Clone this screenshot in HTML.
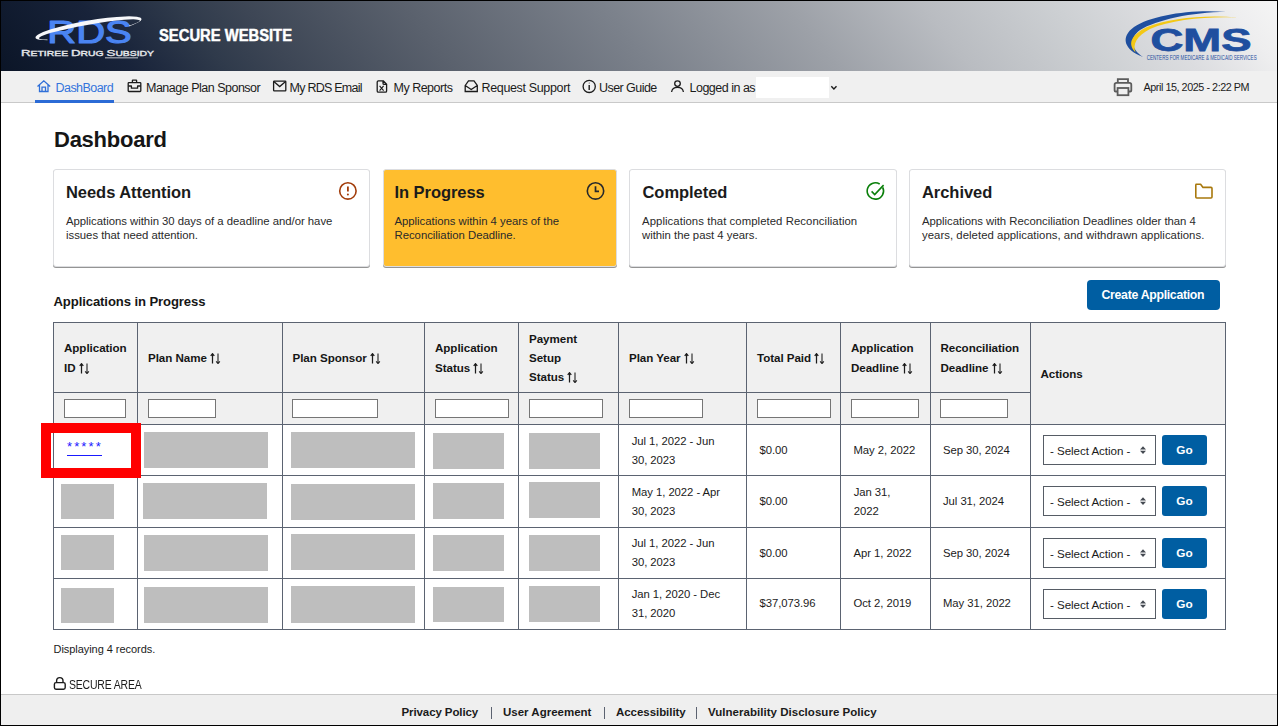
<!DOCTYPE html>
<html><head><meta charset="utf-8">
<style>
*{box-sizing:border-box;margin:0;padding:0}
html,body{width:1278px;height:726px;overflow:hidden;background:#fff}
body{position:relative;font-family:"Liberation Sans",sans-serif;color:#1b1b1b}
.t{position:absolute;white-space:nowrap;line-height:1}
.frame{position:absolute;left:0;top:0;width:1278px;height:726px;border:1px solid #000;pointer-events:none;z-index:50}
#hdr{position:absolute;left:0;top:0;width:1278px;height:71px;
 background:linear-gradient(52deg,#0b1527 0%,#18233a 10%,#2f3a4b 17%,#3d4655 22%,#5a616d 34%,#7b818b 49%,#9da1a8 63%,#b9bcc1 73%,#cdd0d3 83%,#dcdde0 90%,#eeeeef 96%,#f5f5f5 100%)}
#nav{position:absolute;left:0;top:71px;width:1278px;height:32px;background:#f0f0f0;border-bottom:1px solid #c9c9c9}
.nv{font-size:12.5px;color:#1b1b1b;top:81.5px}
.card{position:absolute;top:169px;height:98px;border:1px solid #dcdde0;border-radius:3px;background:#fff;box-shadow:0 1px 0.5px rgba(0,0,0,.42)}
.ct{font-size:16.5px;font-weight:bold;color:#1b1b1b}
.cd{font-size:11.5px;color:#2b2b2b;line-height:14px;white-space:normal}
#tbl{position:absolute;left:53px;top:322px}
.ln{position:absolute;background:#5b6371}
.ph{position:absolute;background:#bebebe}
.th{font-size:11.8px;font-weight:bold;color:#1b1b1b;line-height:19px;white-space:normal}
.td{font-size:11.5px;color:#1b1b1b;line-height:19px}
.inp{position:absolute;top:399px;height:19px;background:#fff;border:1px solid #757575}
.sel{position:absolute;left:1043px;width:113px;height:30px;border:1px solid #565c65;background:#fff}
.go{position:absolute;left:1162px;width:45px;height:30px;background:#005ea2;border-radius:3px}
.ft{font-size:11.5px;font-weight:bold;color:#1b1b1b;top:706px}
</style></head><body>
<div id="hdr"></div>
<div id="nav"></div>
<svg style="position:absolute;left:0;top:0" width="320" height="70" viewBox="0 0 320 70">
 <defs>
  <mask id="swm" maskUnits="userSpaceOnUse" x="0" y="0" width="320" height="70">
   <ellipse cx="88.5" cy="28.3" rx="53.8" ry="7.6" fill="#fff" transform="rotate(-10 88.5 28.3)"/>
   <ellipse cx="89.2" cy="29.6" rx="51.2" ry="4.9" fill="#000" transform="rotate(-10 88.5 28.3)"/>
   <polygon points="47.5,36.5 47.5,60 129,60 129,23" fill="#000"/>
  </mask>
  <linearGradient id="silv" x1="0" y1="0" x2="0" y2="1"><stop offset="0" stop-color="#ffffff"/><stop offset="1" stop-color="#c4c8ce"/></linearGradient>
 </defs>
 <text x="47.3" y="42.6" font-family="Liberation Sans" font-size="32" fill="#4a84f2" stroke="#4a84f2" stroke-width="1.15" stroke-linejoin="round" textLength="84.5" lengthAdjust="spacingAndGlyphs">RDS</text>
 <rect x="0" y="0" width="320" height="70" fill="#f6f7fa" mask="url(#swm)"/>
 <text x="21" y="56.2" font-family="Liberation Sans" font-weight="normal" fill="url(#silv)" stroke="#e6e8ec" stroke-width="0.35" textLength="133" lengthAdjust="spacingAndGlyphs"><tspan font-size="9">R</tspan><tspan font-size="7">ETIREE </tspan><tspan font-size="9">D</tspan><tspan font-size="7">RUG </tspan><tspan font-size="9">S</tspan><tspan font-size="7">UBSIDY</tspan></text>
 <rect x="105" y="57.4" width="33" height="0.9" fill="#d8dbe0"/>
 <text x="159" y="41" font-family="Liberation Sans" font-weight="bold" font-size="15.6" fill="#fff" stroke="#fff" stroke-width="0.45" textLength="133" lengthAdjust="spacingAndGlyphs">SECURE WEBSITE</text>
</svg>
<svg style="position:absolute;left:1100px;top:0" width="177" height="70" viewBox="1100 0 177 70">
 <path d="M1143,57 C1124,50 1120,37 1134,27 C1152,15 1192,9 1226,12 C1192,12 1156,20 1140,30 C1129,38 1131,49 1143,57 Z" fill="#1f4f9f"/>
 <path d="M1135.5,52.5 C1127.5,44 1130.5,35.5 1146.5,27.3 C1170,17.8 1206,14.6 1238,17.6 C1206,16.3 1172,19.8 1150,29 C1136.5,36 1132.5,44 1135.5,52.5 Z" fill="#f3c816"/>
 <text x="1150.5" y="51.4" font-family="Liberation Sans" font-weight="bold" font-size="31" fill="#1f4f9f" stroke="#1f4f9f" stroke-width="0.8" textLength="101" lengthAdjust="spacingAndGlyphs">CMS</text>
 <text x="1146.7" y="59.6" font-family="Liberation Sans" font-size="6.4" fill="#1f4f9f" textLength="110" lengthAdjust="spacingAndGlyphs">CENTERS FOR MEDICARE &amp; MEDICAID SERVICES</text>
</svg>

<div style="position:absolute;left:35px;top:100px;width:79px;height:3px;background:#2b6bd6"></div>
<svg style="position:absolute;left:0;top:70px" width="1278" height="32" viewBox="0 70 1278 32" fill="none" stroke="#1b1b1b" stroke-width="1.3">
 <g stroke="#2f6fd8"><path d="M37.5,86.5 L43.8,80.8 L50.2,86.5 M39.5,85 V91.5 H48 V85 M42,91.5 V87.2 H45.5 V91.5"/></g>
 <g stroke-linejoin="round"><rect x="128.2" y="82.6" width="12.6" height="8.9" rx="0.7"/><path d="M132.4,82.6 V80.6 Q132.4,80.2 132.8,80.2 H136.2 Q136.6,80.2 136.6,80.6 V82.6 M128.2,86 H131.4 V88.2 H137.6 V86 H140.8"/></g>
 <g><rect x="273.6" y="81.2" width="12.2" height="9.6" rx="0.6"/><path d="M273.8,81.6 L279.7,86.6 L285.6,81.6"/></g>
 <g stroke-linejoin="round"><path d="M378.4,80.8 H383.2 L386.6,84.2 V91 Q386.6,92.2 385.4,92.2 H378.4 Q377.2,92.2 377.2,91 V82 Q377.2,80.8 378.4,80.8 Z M383,81 V83.2 Q383,84.4 384.2,84.4 H386.4"/><path d="M379.6,85.8 L383.6,90.6 M383.6,85.8 L379.6,90.6" stroke-width="1.1"/></g>
 <g><path d="M465.2,85.5 L468.5,80.8 H474 L477.3,85.5 V91.5 H465.2 Z M465.2,85.5 L471.2,89.5 L477.3,85.5"/></g>
 <g><circle cx="589.2" cy="86.4" r="6.1"/><path d="M589.2,85 V90" stroke-width="1.4"/><circle cx="589.2" cy="82.9" r="0.5" fill="#1b1b1b" stroke="none"/></g>
 <g><circle cx="677.5" cy="83.6" r="2.8"/><path d="M671.6,92 C672,88.6 674.5,87.4 677.5,87.4 C680.5,87.4 683,88.6 683.4,92"/></g>
 <path d="M831.3,86.3 L833.9,89 L836.5,86.3" stroke-width="1.4"/>
 <g stroke="#5c5c5c" stroke-width="1.8"><path d="M1117.8,82.8 V79.2 H1128 V82.8"/><path d="M1117.3,91.5 H1115.6 Q1114.6,91.5 1114.6,90.5 V84.8 Q1114.6,82.9 1116.5,82.9 H1129.4 Q1131.3,82.9 1131.3,84.8 V90.5 Q1131.3,91.5 1130.3,91.5 H1128.6"/><rect x="1117.6" y="88" width="10.8" height="7.2"/></g>
</svg>
<div style="position:absolute;left:756px;top:77px;width:73px;height:21px;background:#fff"></div>
<div class="t nv" style="left:55.5px;color:#3374dc;letter-spacing:-0.55px">DashBoard</div>
<div class="t nv" style="left:146px;letter-spacing:-0.5px">Manage Plan Sponsor</div>
<div class="t nv" style="left:289.5px;letter-spacing:-0.75px">My RDS Email</div>
<div class="t nv" style="left:393.5px;letter-spacing:-0.5px">My Reports</div>
<div class="t nv" style="left:481.5px;letter-spacing:-0.35px">Request Support</div>
<div class="t nv" style="left:599px;letter-spacing:-0.55px">User Guide</div>
<div class="t nv" style="left:689.5px;letter-spacing:-0.5px">Logged in as</div>
<div class="t" style="left:1143.5px;top:82px;font-size:10.8px;letter-spacing:-0.45px;color:#1b1b1b">April 15, 2025 - 2:22 PM</div>















<!--MAIN-->
<div class="t" style="left:54px;top:128.78px;font-size:22px;letter-spacing:-0.25px;font-weight:bold;color:#161616;">Dashboard</div>
<div class="card" style="left:53px;width:317px;background:#fff"></div>
<div class="card" style="left:383px;width:234px;background:#ffbe2e"></div>
<div class="card" style="left:629px;width:268px;background:#fff"></div>
<div class="card" style="left:909px;width:317px;background:#fff"></div>
<div class="t" style="left:66px;top:184.03px;font-size:16.5px;letter-spacing:-0.05px;font-weight:bold;color:#1b1b1b;">Needs Attention</div>
<div class="t" style="left:394.5px;top:184.03px;font-size:16.5px;letter-spacing:-0.05px;font-weight:bold;color:#1b1b1b;">In Progress</div>
<div class="t" style="left:642.5px;top:184.03px;font-size:16.5px;letter-spacing:-0.05px;font-weight:bold;color:#1b1b1b;">Completed</div>
<div class="t" style="left:922px;top:184.03px;font-size:16.5px;letter-spacing:-0.05px;font-weight:bold;color:#1b1b1b;">Archived</div>
<div class="t" style="left:66px;top:216.39px;font-size:11.35px;letter-spacing:-0.02px;font-weight:normal;color:#2a2a2a;">Applications within 30 days of a deadline and/or have</div>
<div class="t" style="left:66px;top:230.39px;font-size:11.35px;letter-spacing:-0.02px;font-weight:normal;color:#2a2a2a;">issues that need attention.</div>
<div class="t" style="left:394.5px;top:216.39px;font-size:11.35px;letter-spacing:-0.02px;font-weight:normal;color:#2a2a2a;">Applications within 4 years of the</div>
<div class="t" style="left:394.5px;top:230.39px;font-size:11.35px;letter-spacing:-0.02px;font-weight:normal;color:#2a2a2a;">Reconciliation Deadline.</div>
<div class="t" style="left:642px;top:216.39px;font-size:11.35px;letter-spacing:0.065px;font-weight:normal;color:#2a2a2a;">Applications that completed Reconciliation</div>
<div class="t" style="left:642px;top:230.39px;font-size:11.35px;letter-spacing:-0.02px;font-weight:normal;color:#2a2a2a;">within the past 4 years.</div>
<div class="t" style="left:922px;top:216.39px;font-size:11.35px;letter-spacing:-0.02px;font-weight:normal;color:#2a2a2a;">Applications with Reconciliation Deadlines older than 4</div>
<div class="t" style="left:922px;top:230.39px;font-size:11.35px;letter-spacing:0.042px;font-weight:normal;color:#2a2a2a;">years, deleted applications, and withdrawn applications.</div>
<svg style="position:absolute;left:0;top:160px" width="1278" height="50" viewBox="0 160 1278 50" fill="none">
 <circle cx="347.9" cy="190.9" r="8.2" stroke="#a23c0a" stroke-width="1.6"/>
 <path d="M347.9,186.5 V191.6" stroke="#a23c0a" stroke-width="1.8"/><circle cx="347.9" cy="194.6" r="1" fill="#a23c0a"/>
 <circle cx="595.5" cy="190.9" r="8.2" stroke="#26282b" stroke-width="1.6"/>
 <path d="M595.5,186.2 V191.3 H599" stroke="#26282b" stroke-width="1.7"/>
 <g transform="translate(0.4,0.8)"><path d="M882.3,186.5 A8.2,8.2 0 1 1 879.3,183.2" stroke="#0a7f0a" stroke-width="1.6"/>
 <path d="M871.2,190.6 L874.3,193.7 L883.2,184.3" stroke="#0a7f0a" stroke-width="1.6"/></g>
 <path d="M1196,184.2 H1200.6 L1203,187.4 H1211 Q1212,187.4 1212,188.4 V197 Q1212,198 1211,198 H1196.8 Q1195.8,198 1195.8,197 V185 Q1195.8,184.2 1196.6,184.2 Z" stroke="#a8780c" stroke-width="1.6" stroke-linejoin="round"/>
</svg>
<div class="t" style="left:53.5px;top:294.71px;font-size:13.1px;letter-spacing:-0.1px;font-weight:bold;color:#161616;">Applications in Progress</div>
<div style="position:absolute;left:1087px;top:280px;width:133px;height:30px;background:#005ea2;border-radius:4px"></div>
<div class="t" style="left:1101.5px;top:289.09px;font-size:12.3px;letter-spacing:-0.3px;font-weight:bold;color:#fff;">Create Application</div>
<div style="position:absolute;left:53px;top:322px;width:1173px;height:102px;background:#f0f0f0"></div>
<div class="ln" style="left:53px;top:322px;width:1px;height:308px"></div>
<div class="ln" style="left:137px;top:322px;width:1px;height:308px"></div>
<div class="ln" style="left:282px;top:322px;width:1px;height:308px"></div>
<div class="ln" style="left:424px;top:322px;width:1px;height:308px"></div>
<div class="ln" style="left:518px;top:322px;width:1px;height:308px"></div>
<div class="ln" style="left:618px;top:322px;width:1px;height:308px"></div>
<div class="ln" style="left:746px;top:322px;width:1px;height:308px"></div>
<div class="ln" style="left:840px;top:322px;width:1px;height:308px"></div>
<div class="ln" style="left:930px;top:322px;width:1px;height:308px"></div>
<div class="ln" style="left:1030px;top:322px;width:1px;height:308px"></div>
<div class="ln" style="left:1225px;top:322px;width:1px;height:308px"></div>
<div class="ln" style="left:53px;top:322px;width:1173px;height:1px"></div>
<div class="ln" style="left:53px;top:392px;width:977px;height:1px"></div>
<div class="ln" style="left:53px;top:424px;width:1173px;height:1px"></div>
<div class="ln" style="left:53px;top:475px;width:1173px;height:1px"></div>
<div class="ln" style="left:53px;top:527px;width:1173px;height:1px"></div>
<div class="ln" style="left:53px;top:578px;width:1173px;height:1px"></div>
<div class="ln" style="left:53px;top:629px;width:1173px;height:1px"></div>
<div class="t" style="left:64px;top:342.18px;font-size:11.6px;letter-spacing:-0.05px;font-weight:bold;color:#161616;">Application</div>
<div class="t" style="left:64px;top:361.68px;font-size:11.6px;letter-spacing:-0.05px;font-weight:bold;color:#161616;">ID <svg width="11" height="11" viewBox="0 0 11 11" style="vertical-align:-2px" fill="none" stroke-width="1.25"><path d="M2.5,0.8 V10.6 M0.7,2.9 L2.5,0.7 L4.3,2.9" stroke="#1b1b1b"/><path d="M8,0.5 V10.2" stroke="#3a3a3a"/><path d="M6.2,8.3 L8,10.5 L9.8,8.3" stroke="#2a2a2a"/></svg></div>
<div class="t" style="left:148px;top:352.18px;font-size:11.6px;letter-spacing:-0.05px;font-weight:bold;color:#161616;">Plan Name <svg width="11" height="11" viewBox="0 0 11 11" style="vertical-align:-2px" fill="none" stroke-width="1.25"><path d="M2.5,0.8 V10.6 M0.7,2.9 L2.5,0.7 L4.3,2.9" stroke="#1b1b1b"/><path d="M8,0.5 V10.2" stroke="#3a3a3a"/><path d="M6.2,8.3 L8,10.5 L9.8,8.3" stroke="#2a2a2a"/></svg></div>
<div class="t" style="left:292.5px;top:352.18px;font-size:11.6px;letter-spacing:-0.05px;font-weight:bold;color:#161616;">Plan Sponsor <svg width="11" height="11" viewBox="0 0 11 11" style="vertical-align:-2px" fill="none" stroke-width="1.25"><path d="M2.5,0.8 V10.6 M0.7,2.9 L2.5,0.7 L4.3,2.9" stroke="#1b1b1b"/><path d="M8,0.5 V10.2" stroke="#3a3a3a"/><path d="M6.2,8.3 L8,10.5 L9.8,8.3" stroke="#2a2a2a"/></svg></div>
<div class="t" style="left:435px;top:342.18px;font-size:11.6px;letter-spacing:-0.05px;font-weight:bold;color:#161616;">Application</div>
<div class="t" style="left:435px;top:361.68px;font-size:11.6px;letter-spacing:-0.05px;font-weight:bold;color:#161616;">Status <svg width="11" height="11" viewBox="0 0 11 11" style="vertical-align:-2px" fill="none" stroke-width="1.25"><path d="M2.5,0.8 V10.6 M0.7,2.9 L2.5,0.7 L4.3,2.9" stroke="#1b1b1b"/><path d="M8,0.5 V10.2" stroke="#3a3a3a"/><path d="M6.2,8.3 L8,10.5 L9.8,8.3" stroke="#2a2a2a"/></svg></div>
<div class="t" style="left:529px;top:333.18px;font-size:11.6px;letter-spacing:-0.05px;font-weight:bold;color:#161616;">Payment</div>
<div class="t" style="left:529px;top:352.18px;font-size:11.6px;letter-spacing:-0.05px;font-weight:bold;color:#161616;">Setup</div>
<div class="t" style="left:529px;top:371.18px;font-size:11.6px;letter-spacing:-0.05px;font-weight:bold;color:#161616;">Status <svg width="11" height="11" viewBox="0 0 11 11" style="vertical-align:-2px" fill="none" stroke-width="1.25"><path d="M2.5,0.8 V10.6 M0.7,2.9 L2.5,0.7 L4.3,2.9" stroke="#1b1b1b"/><path d="M8,0.5 V10.2" stroke="#3a3a3a"/><path d="M6.2,8.3 L8,10.5 L9.8,8.3" stroke="#2a2a2a"/></svg></div>
<div class="t" style="left:629px;top:352.18px;font-size:11.6px;letter-spacing:-0.05px;font-weight:bold;color:#161616;">Plan Year <svg width="11" height="11" viewBox="0 0 11 11" style="vertical-align:-2px" fill="none" stroke-width="1.25"><path d="M2.5,0.8 V10.6 M0.7,2.9 L2.5,0.7 L4.3,2.9" stroke="#1b1b1b"/><path d="M8,0.5 V10.2" stroke="#3a3a3a"/><path d="M6.2,8.3 L8,10.5 L9.8,8.3" stroke="#2a2a2a"/></svg></div>
<div class="t" style="left:757px;top:352.18px;font-size:11.6px;letter-spacing:-0.05px;font-weight:bold;color:#161616;">Total Paid <svg width="11" height="11" viewBox="0 0 11 11" style="vertical-align:-2px" fill="none" stroke-width="1.25"><path d="M2.5,0.8 V10.6 M0.7,2.9 L2.5,0.7 L4.3,2.9" stroke="#1b1b1b"/><path d="M8,0.5 V10.2" stroke="#3a3a3a"/><path d="M6.2,8.3 L8,10.5 L9.8,8.3" stroke="#2a2a2a"/></svg></div>
<div class="t" style="left:851px;top:342.18px;font-size:11.6px;letter-spacing:-0.05px;font-weight:bold;color:#161616;">Application</div>
<div class="t" style="left:851px;top:361.68px;font-size:11.6px;letter-spacing:-0.05px;font-weight:bold;color:#161616;">Deadline <svg width="11" height="11" viewBox="0 0 11 11" style="vertical-align:-2px" fill="none" stroke-width="1.25"><path d="M2.5,0.8 V10.6 M0.7,2.9 L2.5,0.7 L4.3,2.9" stroke="#1b1b1b"/><path d="M8,0.5 V10.2" stroke="#3a3a3a"/><path d="M6.2,8.3 L8,10.5 L9.8,8.3" stroke="#2a2a2a"/></svg></div>
<div class="t" style="left:940.5px;top:342.18px;font-size:11.6px;letter-spacing:-0.05px;font-weight:bold;color:#161616;">Reconciliation</div>
<div class="t" style="left:940.5px;top:361.68px;font-size:11.6px;letter-spacing:-0.05px;font-weight:bold;color:#161616;">Deadline <svg width="11" height="11" viewBox="0 0 11 11" style="vertical-align:-2px" fill="none" stroke-width="1.25"><path d="M2.5,0.8 V10.6 M0.7,2.9 L2.5,0.7 L4.3,2.9" stroke="#1b1b1b"/><path d="M8,0.5 V10.2" stroke="#3a3a3a"/><path d="M6.2,8.3 L8,10.5 L9.8,8.3" stroke="#2a2a2a"/></svg></div>
<div class="t" style="left:1040.5px;top:368.18px;font-size:11.6px;letter-spacing:-0.05px;font-weight:bold;color:#161616;">Actions</div>
<div class="inp" style="left:64px;width:62px"></div>
<div class="inp" style="left:148px;width:68px"></div>
<div class="inp" style="left:292px;width:86px"></div>
<div class="inp" style="left:435px;width:74px"></div>
<div class="inp" style="left:529px;width:74px"></div>
<div class="inp" style="left:629px;width:74px"></div>
<div class="inp" style="left:757px;width:74px"></div>
<div class="inp" style="left:851px;width:68px"></div>
<div class="inp" style="left:940px;width:68px"></div>
<div class="ph" style="left:144px;top:432px;width:124px;height:36px"></div>
<div class="ph" style="left:291px;top:432px;width:124px;height:36px"></div>
<div class="ph" style="left:433px;top:433px;width:71px;height:36px"></div>
<div class="ph" style="left:529px;top:433px;width:71px;height:36px"></div>
<div class="ph" style="left:61px;top:484px;width:53px;height:35px"></div>
<div class="ph" style="left:143px;top:483px;width:124px;height:36px"></div>
<div class="ph" style="left:291px;top:484px;width:124px;height:36px"></div>
<div class="ph" style="left:433px;top:483px;width:71px;height:36px"></div>
<div class="ph" style="left:529px;top:482px;width:71px;height:36px"></div>
<div class="ph" style="left:61px;top:535px;width:53px;height:35px"></div>
<div class="ph" style="left:144px;top:535px;width:124px;height:36px"></div>
<div class="ph" style="left:291px;top:534px;width:124px;height:36px"></div>
<div class="ph" style="left:433px;top:535px;width:71px;height:36px"></div>
<div class="ph" style="left:529px;top:535px;width:71px;height:36px"></div>
<div class="ph" style="left:61px;top:588px;width:53px;height:35px"></div>
<div class="ph" style="left:144px;top:587px;width:124px;height:36px"></div>
<div class="ph" style="left:291px;top:586px;width:124px;height:37px"></div>
<div class="ph" style="left:433px;top:587px;width:71px;height:35px"></div>
<div class="ph" style="left:529px;top:586px;width:71px;height:36px"></div>
<div class="t" style="left:631.7px;top:435.93px;font-size:11.3px;letter-spacing:-0.05px;font-weight:normal;color:#1b1b1b;">Jul 1, 2022 - Jun</div>
<div class="t" style="left:631.7px;top:454.93px;font-size:11.3px;letter-spacing:-0.05px;font-weight:normal;color:#1b1b1b;">30, 2023</div>
<div class="t" style="left:759.5px;top:445.33px;font-size:11.3px;letter-spacing:-0.05px;font-weight:normal;color:#1b1b1b;">$0.00</div>
<div class="t" style="left:853.5px;top:445.33px;font-size:11.3px;letter-spacing:-0.05px;font-weight:normal;color:#1b1b1b;">May 2, 2022</div>
<div class="t" style="left:943.0px;top:445.33px;font-size:11.3px;letter-spacing:-0.05px;font-weight:normal;color:#1b1b1b;">Sep 30, 2024</div>
<div class="sel" style="top:435px"></div>
<div class="t" style="left:1050px;top:444.68px;font-size:11.6px;letter-spacing:-0.05px;font-weight:normal;color:#1b1b1b;">- Select Action -</div>
<svg style="position:absolute;left:1139px;top:445.6px" width="8" height="9" viewBox="0 0 8 9"><path d="M1,3.5 L4,0.2 L7,3.5 Z M1,4.7 L4,8 L7,4.7 Z" fill="#454a52"/></svg>
<div class="go" style="top:435px"></div>
<div class="t" style="left:1176.3px;top:445.01px;font-size:11.8px;letter-spacing:0px;font-weight:bold;color:#fff;">Go</div>
<div class="t" style="left:631.7px;top:487.03px;font-size:11.3px;letter-spacing:-0.05px;font-weight:normal;color:#1b1b1b;">May 1, 2022 - Apr</div>
<div class="t" style="left:631.7px;top:506.03px;font-size:11.3px;letter-spacing:-0.05px;font-weight:normal;color:#1b1b1b;">30, 2023</div>
<div class="t" style="left:759.5px;top:496.43px;font-size:11.3px;letter-spacing:-0.05px;font-weight:normal;color:#1b1b1b;">$0.00</div>
<div class="t" style="left:853.7px;top:487.03px;font-size:11.3px;letter-spacing:-0.05px;font-weight:normal;color:#1b1b1b;">Jan 31,</div>
<div class="t" style="left:853.7px;top:506.03px;font-size:11.3px;letter-spacing:-0.05px;font-weight:normal;color:#1b1b1b;">2022</div>
<div class="t" style="left:943.0px;top:496.43px;font-size:11.3px;letter-spacing:-0.05px;font-weight:normal;color:#1b1b1b;">Jul 31, 2024</div>
<div class="sel" style="top:486px"></div>
<div class="t" style="left:1050px;top:495.68px;font-size:11.6px;letter-spacing:-0.05px;font-weight:normal;color:#1b1b1b;">- Select Action -</div>
<svg style="position:absolute;left:1139px;top:496.6px" width="8" height="9" viewBox="0 0 8 9"><path d="M1,3.5 L4,0.2 L7,3.5 Z M1,4.7 L4,8 L7,4.7 Z" fill="#454a52"/></svg>
<div class="go" style="top:486px"></div>
<div class="t" style="left:1176.3px;top:496.01px;font-size:11.8px;letter-spacing:0px;font-weight:bold;color:#fff;">Go</div>
<div class="t" style="left:631.7px;top:538.13px;font-size:11.3px;letter-spacing:-0.05px;font-weight:normal;color:#1b1b1b;">Jul 1, 2022 - Jun</div>
<div class="t" style="left:631.7px;top:557.13px;font-size:11.3px;letter-spacing:-0.05px;font-weight:normal;color:#1b1b1b;">30, 2023</div>
<div class="t" style="left:759.5px;top:547.53px;font-size:11.3px;letter-spacing:-0.05px;font-weight:normal;color:#1b1b1b;">$0.00</div>
<div class="t" style="left:853.5px;top:547.53px;font-size:11.3px;letter-spacing:-0.05px;font-weight:normal;color:#1b1b1b;">Apr 1, 2022</div>
<div class="t" style="left:943.0px;top:547.53px;font-size:11.3px;letter-spacing:-0.05px;font-weight:normal;color:#1b1b1b;">Sep 30, 2024</div>
<div class="sel" style="top:538px"></div>
<div class="t" style="left:1050px;top:547.68px;font-size:11.6px;letter-spacing:-0.05px;font-weight:normal;color:#1b1b1b;">- Select Action -</div>
<svg style="position:absolute;left:1139px;top:548.6px" width="8" height="9" viewBox="0 0 8 9"><path d="M1,3.5 L4,0.2 L7,3.5 Z M1,4.7 L4,8 L7,4.7 Z" fill="#454a52"/></svg>
<div class="go" style="top:538px"></div>
<div class="t" style="left:1176.3px;top:548.01px;font-size:11.8px;letter-spacing:0px;font-weight:bold;color:#fff;">Go</div>
<div class="t" style="left:631.7px;top:589.03px;font-size:11.3px;letter-spacing:-0.05px;font-weight:normal;color:#1b1b1b;">Jan 1, 2020 - Dec</div>
<div class="t" style="left:631.7px;top:608.03px;font-size:11.3px;letter-spacing:-0.05px;font-weight:normal;color:#1b1b1b;">31, 2020</div>
<div class="t" style="left:759.5px;top:598.43px;font-size:11.3px;letter-spacing:-0.05px;font-weight:normal;color:#1b1b1b;">$37,073.96</div>
<div class="t" style="left:853.5px;top:598.43px;font-size:11.3px;letter-spacing:-0.05px;font-weight:normal;color:#1b1b1b;">Oct 2, 2019</div>
<div class="t" style="left:943.0px;top:598.43px;font-size:11.3px;letter-spacing:-0.05px;font-weight:normal;color:#1b1b1b;">May 31, 2022</div>
<div class="sel" style="top:589px"></div>
<div class="t" style="left:1050px;top:598.68px;font-size:11.6px;letter-spacing:-0.05px;font-weight:normal;color:#1b1b1b;">- Select Action -</div>
<svg style="position:absolute;left:1139px;top:599.6px" width="8" height="9" viewBox="0 0 8 9"><path d="M1,3.5 L4,0.2 L7,3.5 Z M1,4.7 L4,8 L7,4.7 Z" fill="#454a52"/></svg>
<div class="go" style="top:589px"></div>
<div class="t" style="left:1176.3px;top:599.01px;font-size:11.8px;letter-spacing:0px;font-weight:bold;color:#fff;">Go</div>
<div class="t" style="left:67px;top:440.30px;font-size:13px;letter-spacing:2.1px;font-weight:normal;color:#1a1aff;">*****</div>
<div style="position:absolute;left:67px;top:455px;width:35px;height:1px;background:#1a1aff"></div>
<div style="position:absolute;left:41px;top:423px;width:100px;height:55px;border:10px solid #ff0000;z-index:5"></div>
<div class="t" style="left:53.5px;top:644.29px;font-size:11px;letter-spacing:-0.05px;font-weight:normal;color:#1b1b1b;">Displaying 4 records.</div>
<svg style="position:absolute;left:52px;top:675px" width="16" height="16" viewBox="52 675 16 16" fill="none" stroke="#1b1b1b" stroke-width="1.4"><path d="M56.6,682.6 V680.8 A3.2,3.2 0 0 1 63,680.8 V682.6"/><rect x="54.4" y="682.6" width="10.8" height="6.6" rx="1.6"/></svg>
<div class="t" style="left:68.5px;top:680.03px;font-size:11.9px;letter-spacing:-0.2px;font-weight:normal;color:#1b1b1b;transform:scaleX(0.88);transform-origin:0 0">SECURE AREA</div>
<div style="position:absolute;left:0;top:694px;width:1278px;height:32px;background:#efefef;border-top:1px solid #c8c8c8"></div>
<div class="t" style="left:401.5px;top:706.77px;font-size:11.5px;letter-spacing:-0.1px;font-weight:bold;color:#1b1b1b;">Privacy Policy</div>
<div class="t" style="left:503px;top:706.77px;font-size:11.5px;letter-spacing:0.0px;font-weight:bold;color:#1b1b1b;">User Agreement</div>
<div class="t" style="left:616px;top:706.77px;font-size:11.5px;letter-spacing:-0.05px;font-weight:bold;color:#1b1b1b;">Accessibility</div>
<div class="t" style="left:708px;top:706.77px;font-size:11.5px;letter-spacing:0.03px;font-weight:bold;color:#1b1b1b;">Vulnerability Disclosure Policy</div>
<div style="position:absolute;left:491px;top:707px;width:1px;height:12px;background:#5b6270"></div>
<div style="position:absolute;left:604px;top:707px;width:1px;height:12px;background:#5b6270"></div>
<div style="position:absolute;left:696px;top:707px;width:1px;height:12px;background:#5b6270"></div>
<!--/MAIN-->
<div class="frame"></div>
</body></html>
